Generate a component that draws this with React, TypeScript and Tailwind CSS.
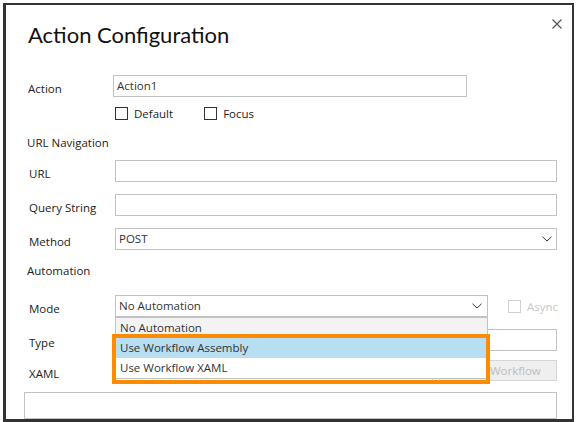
import React from "react";

function Row({ label, children, className }: { label: string; children: React.ReactNode; className: string }) {
  return (
    <div className={className}>
      <div className="w-[86px] shrink-0 pt-[6px] leading-[16px] text-[#222]">{label}</div>
      <div className="flex-1 min-w-0">{children}</div>
    </div>
  );
}

function Chevron() {
  return (
    <svg width="10" height="6" viewBox="0 0 10 6" className="shrink-0">
      <path d="M0.5 0.8 L5 5 L9.5 0.8" fill="none" stroke="#333" strokeWidth="1" />
    </svg>
  );
}

function Box({ children, disabled }: { children?: React.ReactNode; disabled?: boolean }) {
  return (
    <div className="flex items-center h-[13px] gap-[6px]">
      <div className={disabled ? "w-[13px] h-[13px] shrink-0 border border-[#d0d0d0] bg-white" : "w-[13px] h-[13px] shrink-0 border border-[#333] bg-white"} />
      <span className={disabled ? "text-[#c8c8c8] leading-[13px]" : "text-[#222] leading-[13px]"}>{children}</span>
    </div>
  );
}

export default function App() {
  return (
    <div className="w-[576px] h-[422px] bg-white pl-[3px] pt-[3px] overflow-hidden font-['Open_Sans','Noto_Sans',sans-serif] text-[11.5px] text-[#222]">
      <div className="relative w-[571px] h-[419px] bg-white border-[#333] border-l-[3px] border-t-[2px] border-r-[2px] border-b-[3px] overflow-hidden flex flex-col pl-[23px] pr-[15px]">
        <svg width="10" height="10" viewBox="0 0 10 10" className="absolute right-[10px] top-[14px]">
          <path d="M0.5 0.5 L9.5 9.5 M9.5 0.5 L0.5 9.5" stroke="#555" strokeWidth="1.2" fill="none" />
        </svg>

        <h1 className="mt-[15px] -ml-[1px] font-['Lato','Open_Sans',sans-serif] text-[22px] leading-[30px] font-normal text-[#111]">Action Configuration</h1>

        <Row label="Action" className="flex items-start mt-[25px] -ml-[1px]">
          <div className="w-[354px] -ml-[1px] h-[22px] border border-[#c2c2c2] bg-white pl-[3px] leading-[20px] text-[#333]">Action1</div>
        </Row>

        <div className="flex mt-[10px] pl-[86px] gap-[31px]">
          <Box>Default</Box>
          <Box>Focus</Box>
        </div>

        <div className="mt-[15px] -ml-[2px] leading-[16px] text-[#222]">URL Navigation</div>

        <Row label="URL" className="flex items-start mt-[9px]">
          <div className="h-[22px] border border-[#c2c2c2] bg-white" />
        </Row>

        <Row label="Query String" className="flex items-start mt-[12px]">
          <div className="h-[22px] border border-[#c2c2c2] bg-white" />
        </Row>

        <Row label="Method" className="flex items-start mt-[12px]">
          <div className="h-[22px] border border-[#c2c2c2] bg-white pl-[3px] pr-[4px] flex items-center justify-between text-[#333]">
            <span className="leading-[20px]">POST</span>
            <Chevron />
          </div>
        </Row>

        <div className="mt-[13px] -ml-[2px] leading-[16px] text-[#222]">Automation</div>

        <Row label="Mode" className="flex items-start mt-[16px] relative z-10">
          <div className="flex items-center">
            <div className="relative w-[373px] shrink-0">
              <div className="h-[22px] border border-[#c2c2c2] bg-white pl-[3px] pr-[5px] flex items-center justify-between text-[#333]">
                <span className="leading-[20px]">No Automation</span>
                <Chevron />
              </div>
              <div className="absolute left-0 top-[22px] w-full border border-[#c2c2c2] bg-white text-[#333]">
                <div className="h-[20px] bg-[#f3f3f3] pl-[4px] leading-[20px]">No Automation</div>
                <div className="h-[20px] bg-[#b8def1] pl-[4px] leading-[20px]">Use Workflow Assembly</div>
                <div className="h-[20px] bg-white pl-[4px] leading-[20px]">Use Workflow XAML</div>
              </div>
              <div className="absolute left-[-3px] top-[39px] w-[378px] h-[50px] border-[4px] border-[#ff8c00]" />
            </div>
            <div className="ml-[20px]">
              <Box disabled>Async</Box>
            </div>
          </div>
        </Row>

        <Row label="Type" className="flex items-start mt-[12px]">
          <div className="h-[22px] border border-[#c2c2c2] bg-white" />
        </Row>

        <Row label="XAML" className="flex items-start mt-[9px]">
          <div className="flex">
            <div className="w-[318px] h-[21px] border border-[#c2c2c2] bg-white" />
            <div className="ml-[6px] flex-1 h-[21px] border border-[#d6d6d6] bg-[#efefef] flex items-center justify-center text-[#bdbdbd] leading-[19px]">
              Select Workflow
            </div>
          </div>
        </Row>

        <div className="mt-[10px] -ml-[5px] h-[60px] border border-[#c2c2c2] bg-white" />
      </div>
    </div>
  );
}
